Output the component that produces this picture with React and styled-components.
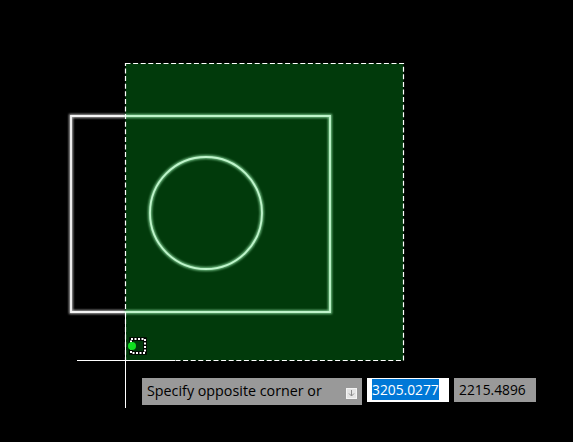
import React from "react";
import styled, { createGlobalStyle } from "styled-components";

const Global = createGlobalStyle`
  html, body {
    margin: 0;
    background: #000;
  }
`;

const Canvas = styled.div`
  position: relative;
  width: 573px;
  height: 442px;
  overflow: hidden;
  background: #000;
`;

const Drawing = styled.svg`
  display: block;
  width: 573px;
  height: 442px;
`;

// dynamic input bar, floats over the drawing next to the cursor
const DynamicInput = styled.div`
  position: absolute;
  left: 142px;
  top: 378px;
  display: flex;
  align-items: flex-start;
  gap: 5px;
  font-family: "Open Sans", "Noto Sans", sans-serif;
  font-size: 13.8px;
  color: #000;
`;

const Prompt = styled.div`
  display: flex;
  align-items: center;
  justify-content: space-between;
  box-sizing: border-box;
  width: 220px;
  height: 27px;
  padding: 0 5px 3px 5px;
  background: #999;
  font-size: 14.3px;
`;

const PromptArrow = styled.div`
  display: flex;
  align-items: center;
  justify-content: center;
  width: 11px;
  height: 11px;
  margin-top: 7px;
  background: #e4e4e4;
  border: 1px solid #f4f4f4;
  box-sizing: border-box;
`;

const Field = styled.div`
  box-sizing: border-box;
  width: 82px;
  height: 24px;
  padding: 1px 5px;
  line-height: 21px;
  background: ${(p) => (p.$active ? "#fff" : "#999")};
`;

const Selected = styled.span`
  display: inline-block;
  height: 21px;
  background: #0078d7;
  color: #fff;
`;

function Glow({ children, color, core }) {
  // blurred stroke under a sharp one gives the highlighted line look
  return (
    <>
      <g stroke={color} strokeOpacity="0.8" strokeWidth="4" fill="none" filter="url(#soft)">{children}</g>
      <g stroke={core} strokeWidth="1.8" fill="none">{children}</g>
    </>
  );
}

export default function App() {
  return (
    <Canvas>
      <Global />
      <Drawing viewBox="0 0 573 442">
        <defs>
          <filter id="soft" x="-10%" y="-10%" width="120%" height="120%">
            <feGaussianBlur stdDeviation="1" />
          </filter>
        </defs>

        <rect x="125.5" y="63.5" width="278" height="297" fill="#013a0b" />

        <Glow color="#cfcfcf" core="#f4f4f4">
          <path d="M125 116H71V312H125" />
        </Glow>
        <Glow color="#8fdfa3" core="#bff4cb">
          <path d="M125 116H330V312H125" />
          <circle cx="206" cy="213" r="56" />
        </Glow>

        <rect
          x="125.5"
          y="63.5"
          width="278"
          height="297"
          fill="none"
          stroke="#fff"
          strokeWidth="1.2"
          strokeDasharray="5 2.6"
        />

        <path d="M77 360.5H175M125.5 312V408" stroke="#fff" fill="none" />

        <rect x="131" y="339" width="14" height="14" fill="none" stroke="#000" strokeWidth="3.5" />
        <rect
          x="131"
          y="339"
          width="14"
          height="14"
          fill="none"
          stroke="#fff"
          strokeWidth="2"
          strokeDasharray="2 1.5"
        />
        <circle cx="132" cy="346" r="4" fill="#10e020" />
      </Drawing>

      <DynamicInput>
        <Prompt>
          <span>Specify opposite corner or</span>
          <PromptArrow>
            <svg width="9" height="9" viewBox="0 0 9 9">
              <path d="M4.5 1V7M2 4.5L4.5 7L7 4.5" stroke="#8a8a8a" fill="none" />
            </svg>
          </PromptArrow>
        </Prompt>
        <Field $active>
          <Selected>3205.0277</Selected>
        </Field>
        <Field>2215.4896</Field>
      </DynamicInput>
    </Canvas>
  );
}
